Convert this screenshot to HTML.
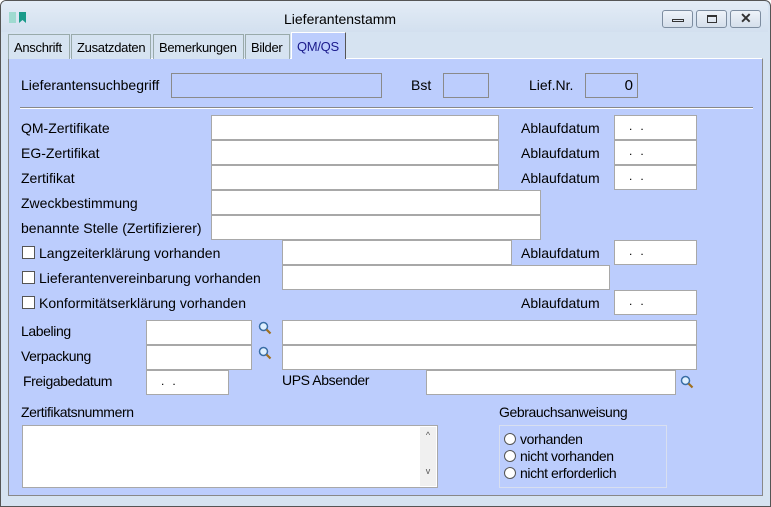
<!DOCTYPE html>
<html><head><style>
*{margin:0;padding:0;box-sizing:border-box}
body{width:771px;height:507px;overflow:hidden;background:#fff;font-family:"Liberation Sans",Arial,sans-serif;font-size:14px;color:#000;position:relative}
.win{position:absolute;left:0;top:0;width:771px;height:507px;border:1px solid #555;border-radius:6px 6px 0 0;background:#d6e3f1}
.tb{position:absolute;left:1px;top:1px;width:767px;height:31px;background:linear-gradient(#e3ecf6,#d3e0ef);border-radius:5px 5px 0 0}
.a{position:absolute;white-space:nowrap}
.f{position:absolute;background:#fff;border:1px solid #a8a8a8}
.fb{position:absolute;border:1px solid #8a8a8a;background:#bccdfd}
.tab{position:absolute;top:34px;height:25px;background:#d6e3f1;border:1px solid #9aa;border-bottom:none;font-size:13px;padding:5px 0 0 5px;letter-spacing:-0.3px}
.panel{position:absolute;left:8px;top:58px;width:755px;height:438px;background:#bccdfd;border:1px solid #888;border-top:1px solid #fff}
.cb{position:absolute;width:13px;height:13px;border:1px solid #555;background:#fff}
.rd{position:absolute;width:12px;height:12px;border:1px solid #555;border-radius:50%;background:#fff}
.btn{position:absolute;top:10px;width:31px;height:18px;border:1px solid #7d8da0;border-radius:3px;background:linear-gradient(#eef3f9,#d5dfeb)}
.dt{font-size:12px;letter-spacing:8px;padding:3px 0 0 14px}
.n{letter-spacing:-0.4px}
</style></head><body>
<div class="win"></div>
<div class="tb"></div>
<svg class="a" style="left:9px;top:12px" width="18" height="11"><rect x="0" y="0" width="7" height="11" fill="#9fdad0"/><path d="M10 0h7v11l-3.5-3-3.5 3z" fill="#1a9a8a"/></svg>
<div class="a" style="left:284px;top:11px;font-size:14px">Lieferantenstamm</div>
<div class="btn" style="left:662px"><div class="a" style="left:9px;top:8px;width:12px;height:3px;border:1px solid #333"></div></div>
<div class="btn" style="left:696px"><div class="a" style="left:10px;top:4px;width:10px;height:8px;border:1px solid #333;border-top-width:2px"></div></div>
<div class="btn" style="left:730px"><div class="a" style="left:9px;top:-1px;font-size:14px;color:#333;font-weight:bold">✕</div></div>
<div class="panel"></div>
<div class="tab" style="left:8px;width:62px">Anschrift</div>
<div class="tab" style="left:71px;width:80px">Zusatzdaten</div>
<div class="tab" style="left:153px;width:91px">Bemerkungen</div>
<div class="tab" style="left:245px;width:45px">Bilder</div>
<div class="tab" style="left:291px;top:32px;height:27px;width:55px;background:#bccdfd;color:#1a1a8c;border-color:#fff #555 #bccdfd #fff;padding-top:6px">QM/QS</div>

<div class="a" style="left:21px;top:77px">Lieferantensuchbegriff</div>
<div class="fb" style="left:171px;top:73px;width:211px;height:25px"></div>
<div class="a" style="left:411px;top:77px">Bst</div>
<div class="fb" style="left:443px;top:73px;width:46px;height:25px"></div>
<div class="a" style="left:529px;top:77px">Lief.Nr.</div>
<div class="fb" style="left:585px;top:73px;width:53px;height:25px"><span class="a" style="right:4px;top:3px;font-size:15px">0</span></div>
<div class="a" style="left:20px;top:107px;width:733px;height:2px;background:#888;border-bottom:1px solid #fff"></div>

<div class="a" style="left:21px;top:120px">QM-Zertifikate</div>
<div class="f" style="left:211px;top:115px;width:288px;height:25px"></div>
<div class="a" style="left:521px;top:120px">Ablaufdatum</div>
<div class="f dt" style="left:614px;top:115px;width:83px;height:25px">..</div>
<div class="a" style="left:21px;top:145px">EG-Zertifikat</div>
<div class="f" style="left:211px;top:140px;width:288px;height:25px"></div>
<div class="a" style="left:521px;top:145px">Ablaufdatum</div>
<div class="f dt" style="left:614px;top:140px;width:83px;height:25px">..</div>
<div class="a" style="left:21px;top:170px">Zertifikat</div>
<div class="f" style="left:211px;top:165px;width:288px;height:25px"></div>
<div class="a" style="left:521px;top:170px">Ablaufdatum</div>
<div class="f dt" style="left:614px;top:165px;width:83px;height:25px">..</div>
<div class="a" style="left:21px;top:195px">Zweckbestimmung</div>
<div class="f" style="left:211px;top:190px;width:330px;height:25px"></div>
<div class="a" style="left:21px;top:220px">benannte Stelle (Zertifizierer)</div>
<div class="f" style="left:211px;top:215px;width:330px;height:25px"></div>

<div class="cb" style="left:22px;top:246px"></div><div class="a" style="left:39px;top:245px">Langzeiterklärung vorhanden</div>
<div class="f" style="left:282px;top:240px;width:230px;height:25px"></div>
<div class="a" style="left:521px;top:245px">Ablaufdatum</div>
<div class="f dt" style="left:614px;top:240px;width:83px;height:25px">..</div>
<div class="cb" style="left:22px;top:271px"></div><div class="a" style="left:39px;top:270px">Lieferantenvereinbarung vorhanden</div>
<div class="f" style="left:282px;top:265px;width:328px;height:25px"></div>
<div class="cb" style="left:22px;top:296px"></div><div class="a" style="left:39px;top:295px">Konformitätserklärung vorhanden</div>
<div class="a" style="left:521px;top:295px">Ablaufdatum</div>
<div class="f dt" style="left:614px;top:290px;width:83px;height:25px">..</div>

<div class="a n" style="left:21px;top:323px">Labeling</div>
<div class="f" style="left:146px;top:320px;width:106px;height:25px"></div>
<svg class="a" style="left:258px;top:321px" width="14" height="14"><circle cx="5.5" cy="5.5" r="4" fill="#dff0ff" stroke="#3a6ea5" stroke-width="1.5"/><path d="M8.5 8.5l4 4" stroke="#a07020" stroke-width="2.2"/></svg>
<div class="f" style="left:282px;top:320px;width:415px;height:25px"></div>
<div class="a n" style="left:21px;top:348px">Verpackung</div>
<div class="f" style="left:146px;top:345px;width:106px;height:25px"></div>
<svg class="a" style="left:258px;top:346px" width="14" height="14"><circle cx="5.5" cy="5.5" r="4" fill="#dff0ff" stroke="#3a6ea5" stroke-width="1.5"/><path d="M8.5 8.5l4 4" stroke="#a07020" stroke-width="2.2"/></svg>
<div class="f" style="left:282px;top:345px;width:415px;height:25px"></div>
<div class="a n" style="left:23px;top:373px">Freigabedatum</div>
<div class="f dt" style="left:146px;top:370px;width:83px;height:25px">..</div>
<div class="a n" style="left:282px;top:372px">UPS Absender</div>
<div class="f" style="left:426px;top:370px;width:250px;height:25px"></div>
<svg class="a" style="left:680px;top:375px" width="14" height="14"><circle cx="5.5" cy="5.5" r="4" fill="#dff0ff" stroke="#3a6ea5" stroke-width="1.5"/><path d="M8.5 8.5l4 4" stroke="#a07020" stroke-width="2.2"/></svg>

<div class="a n" style="left:21px;top:404px">Zertifikatsnummern</div>
<div class="f" style="left:22px;top:425px;width:416px;height:63px"><div class="a" style="right:1px;top:1px;width:16px;height:59px;background:#f0f0f0;font-size:9px;color:#555;text-align:center;line-height:12px;padding-top:2px">^<br><br><br>v</div></div>
<div class="a n" style="left:499px;top:404px">Gebrauchsanweisung</div>
<div class="a" style="left:499px;top:425px;width:168px;height:63px;border:1px solid #d8dff0"></div>
<div class="rd" style="left:504px;top:433px"></div><div class="a n" style="left:520px;top:431px">vorhanden</div>
<div class="rd" style="left:504px;top:450px"></div><div class="a n" style="left:520px;top:448px">nicht vorhanden</div>
<div class="rd" style="left:504px;top:467px"></div><div class="a n" style="left:520px;top:465px">nicht erforderlich</div>
</body></html>
